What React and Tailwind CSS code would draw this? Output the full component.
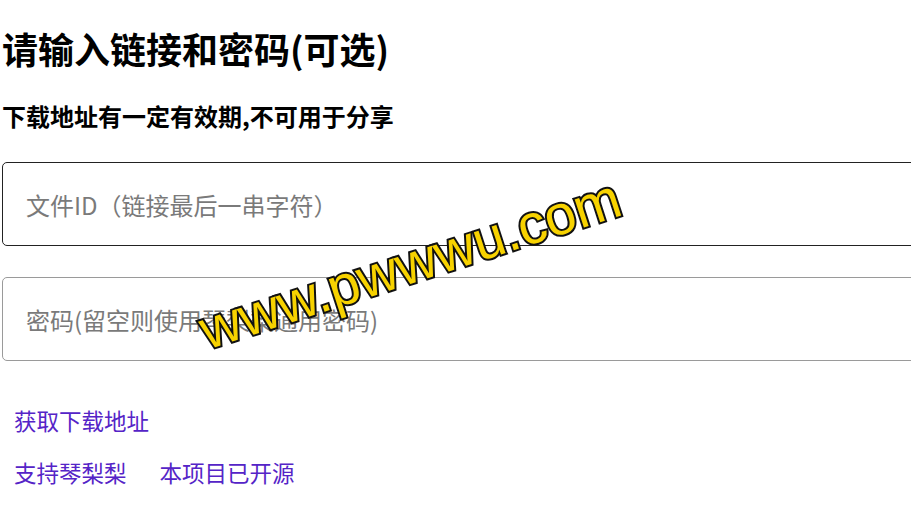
import React from "react";

const cjk = "font-['Noto_Sans_CJK_SC','Noto_Sans',sans-serif]";

const App = () => {
  return (
    <main className={`relative min-h-screen overflow-hidden bg-white pl-[2px] text-black ${cjk}`}>
      <h1 className="mt-[24px] text-[36px] font-bold leading-[48px]">
        请输入链接和密码(可选)
      </h1>

      <h3 className="mt-[28px] text-[24px] font-bold leading-[32px]">
        下载地址有一定有效期,不可用于分享
      </h3>

      <div className="mt-[30px] flex w-[960px] flex-col gap-[31px]">
        <input
          type="text"
          placeholder="文件ID（链接最后一串字符）"
          className="h-[84px] w-full rounded-[5px] border border-[#222] bg-white pl-[23px] text-[24px] outline-none placeholder:text-[#7a7a7a]"
        />
        <input
          type="password"
          placeholder="密码(留空则使用琴梨梨通用密码)"
          className="h-[84px] w-full rounded-[5px] border border-[#9a9a9a] bg-white pl-[23px] text-[24px] outline-none placeholder:text-[#7a7a7a]"
        />
      </div>

      {/* Links */}
      <div className="mt-[44px] pl-[12px] text-[22.5px] leading-[30px] text-[#5524c7]">
        <a href="#" className="block">获取下载地址</a>
        <div className="mt-[22px] flex gap-[33px]">
          <a href="#">支持琴梨梨</a>
          <a href="#">本项目已开源</a>
        </div>
      </div>

      {/* Watermark overlay */}
      <div
        aria-hidden="true"
        className="pointer-events-none absolute left-[410px] top-[264px] -translate-x-1/2 -translate-y-1/2 -rotate-[18deg] whitespace-nowrap font-['Liberation_Sans',sans-serif] text-[56px] leading-none text-[#f7d200] [-webkit-text-stroke:4px_#111] [paint-order:stroke_fill]"
      >
        www.pwwwu.com
      </div>
    </main>
  );
};

export default App;
